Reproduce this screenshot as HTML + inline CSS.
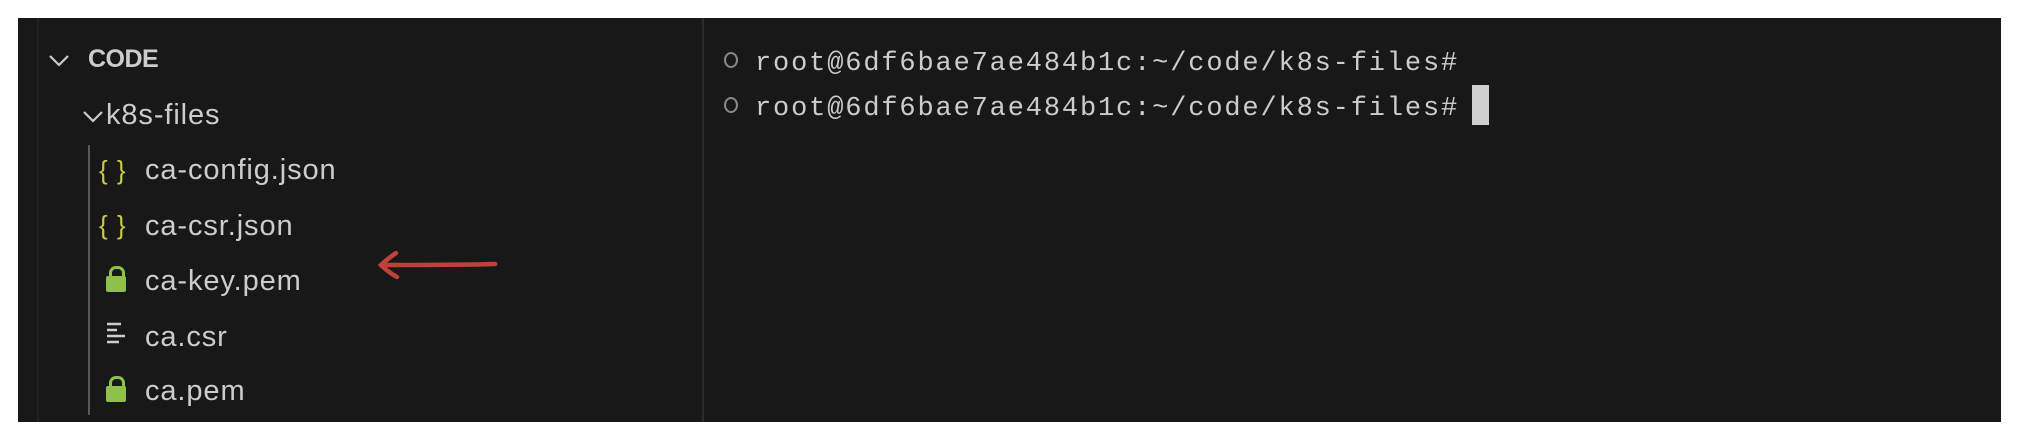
<!DOCTYPE html>
<html><head><style>
html,body{margin:0;padding:0;background:#fff;width:2024px;height:444px;overflow:hidden}
.panel{position:absolute;left:18px;top:18px;width:1983px;height:404px;background:#181818}
.vl{position:absolute;background:#2b2b2b;width:2px}
.t{position:absolute;color:#cccccc;font-family:"Liberation Sans",sans-serif;font-size:29px;white-space:nowrap;letter-spacing:0.9px}
.term{position:absolute;color:#cccccc;font-family:"Liberation Mono",monospace;font-size:27px;letter-spacing:1.85px;white-space:nowrap}
.circ{position:absolute;width:10px;height:12px;border:2px solid #888;border-radius:50%}
.lock{position:absolute;width:20px;height:16px;background:#8dc149;border-radius:2px}
.lock:before{content:"";position:absolute;left:3px;top:-10px;width:10px;height:10px;border:3px solid #8dc149;border-bottom:none;border-radius:7px 7px 0 0}
.br{position:absolute;color:#cbcb41;font-family:"Liberation Sans",sans-serif;font-size:26px;letter-spacing:1px}
</style></head><body>
<div class="panel"></div>
<div class="vl" style="left:37px;top:18px;height:404px;background:#222"></div>
<div class="vl" style="left:702px;top:18px;height:404px"></div>
<div class="vl" style="left:88px;top:145px;height:270px;width:2px;background:#585858"></div>
<svg style="position:absolute;left:48px;top:53px" width="22" height="16"><path d="M2 3 L11 12 L20 3" stroke="#ccc" stroke-width="2.2" fill="none"/></svg>
<div class="t" style="left:88px;top:45px;font-weight:bold;font-size:25px;letter-spacing:-0.5px">CODE</div>
<svg style="position:absolute;left:82px;top:109px" width="22" height="16"><path d="M2 3 L11 12 L20 3" stroke="#ccc" stroke-width="2.2" fill="none"/></svg>
<div class="t" style="left:106px;top:99px">k8s-files</div>
<div class="br" style="left:99px;top:155px">{ }</div>
<div class="t" style="left:145px;top:154px">ca-config.json</div>
<div class="br" style="left:99px;top:210px">{ }</div>
<div class="t" style="left:145px;top:210px">ca-csr.json</div>
<div class="lock" style="left:106px;top:276px"></div>
<div class="t" style="left:145px;top:265px">ca-key.pem</div>
<svg style="position:absolute;left:105px;top:321px" width="22" height="24"><g stroke="#ccc" stroke-width="2.5"><line x1="2" y1="3" x2="16" y2="3"/><line x1="2" y1="9" x2="12" y2="9"/><line x1="2" y1="15" x2="20" y2="15"/><line x1="2" y1="21" x2="14" y2="21"/></g></svg>
<div class="t" style="left:145px;top:321px">ca.csr</div>
<div class="lock" style="left:106px;top:386px"></div>
<div class="t" style="left:145px;top:375px">ca.pem</div>
<svg style="position:absolute;left:370px;top:248px" width="130" height="34"><path d="M125 16 Q90 17 12 17" stroke="#c0403a" stroke-width="4.5" fill="none" stroke-linecap="round"/><path d="M26 5 Q16 12 11 17 Q18 24 27 29" stroke="#c0403a" stroke-width="4.5" fill="none" stroke-linecap="round"/></svg>
<div class="circ" style="left:724px;top:52px"></div>
<div class="term" style="left:755px;top:49px">root@6df6bae7ae484b1c:~/code/k8s-files#</div>
<div class="circ" style="left:724px;top:97px"></div>
<div class="term" style="left:755px;top:94px">root@6df6bae7ae484b1c:~/code/k8s-files#</div>
<div style="position:absolute;left:1472px;top:85px;width:17px;height:40px;background:#d0d0d0"></div>
</body></html>
